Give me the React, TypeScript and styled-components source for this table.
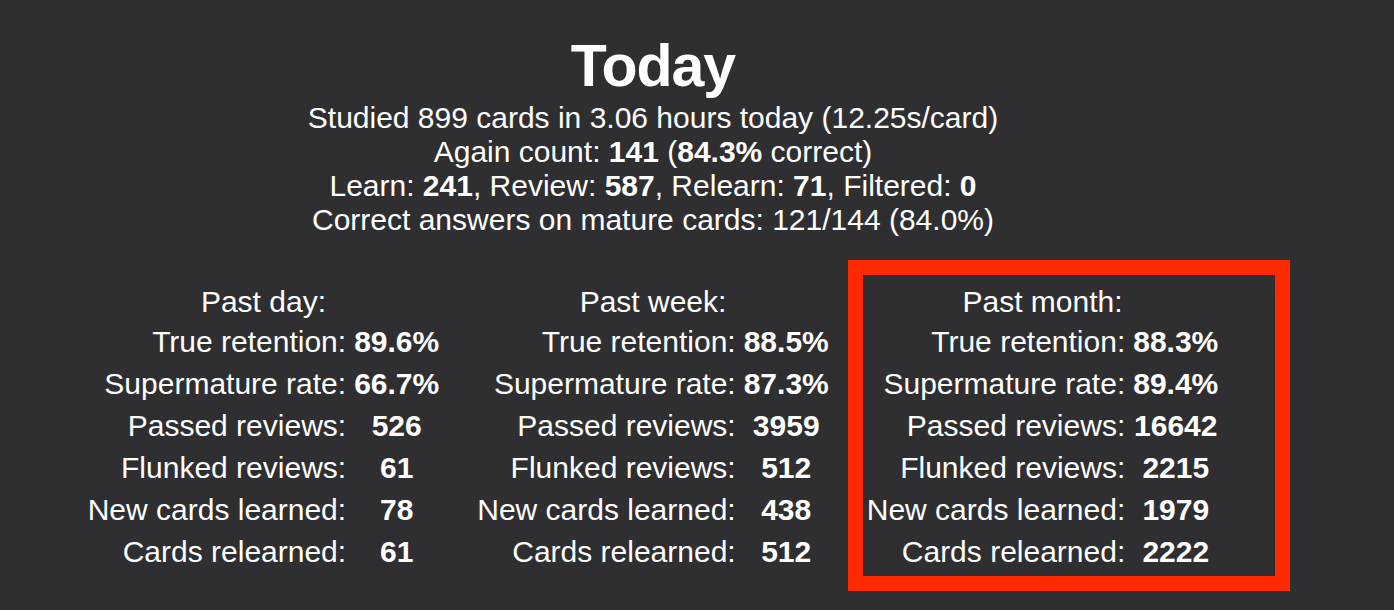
import React from "react";
import styled, { createGlobalStyle } from "styled-components";

const GlobalStyle = createGlobalStyle`
  html, body {
    margin: 0;
    padding: 0;
    background: #2f2f31;
  }
  body {
    font-family: "Liberation Sans", Arial, Helvetica, sans-serif;
    color: #ffffff;
  }
`;

const Page = styled.div`
  box-sizing: border-box;
  width: 1306px;
  min-height: 610px;
  padding-top: 31px;
  text-align: center;
`;

const Title = styled.h1`
  margin: 0;
  font-size: 59px;
  line-height: 70px;
  font-weight: 700;
  letter-spacing: -1px;
`;

const Summary = styled.div`
  font-size: 30px;
  line-height: 34px;
`;

const Line = styled.div``;

const Columns = styled.div`
  margin-top: 48px;
  display: flex;
  justify-content: center;
  gap: 38px;
`;

const Column = styled.div`
  position: relative;
`;

const Highlight = styled.div`
  position: absolute;
  left: -19px;
  top: -25px;
  width: 412px;
  height: 301px;
  border: 15px solid #ff2a00;
  pointer-events: none;
`;

const StatTable = styled.table`
  border-collapse: collapse;
  border-spacing: 0;
  font-size: 30px;
  line-height: 34px;
`;

const HeadCell = styled.th`
  font-weight: 400;
  text-align: center;
  padding: 0 0 2px;
`;

const Label = styled.td`
  text-align: right;
  padding: 4px 4px 4px 0;
  white-space: nowrap;
`;

const Value = styled.td`
  text-align: center;
  font-weight: 700;
  padding: 4px 0 4px 4px;
  white-space: nowrap;
`;

type Period = {
  title: string;
  retention: string;
  supermature: string;
  passed: string;
  flunked: string;
  learned: string;
  relearned: string;
  highlight?: boolean;
};

const periods: Period[] = [
  { title: "Past day:", retention: "89.6%", supermature: "66.7%", passed: "526", flunked: "61", learned: "78", relearned: "61" },
  { title: "Past week:", retention: "88.5%", supermature: "87.3%", passed: "3959", flunked: "512", learned: "438", relearned: "512" },
  { title: "Past month:", retention: "88.3%", supermature: "89.4%", passed: "16642", flunked: "2215", learned: "1979", relearned: "2222", highlight: true },
];

function PeriodTable({ p }: { p: Period }) {
  const rows: [string, string][] = [
    ["True retention:", p.retention],
    ["Supermature rate:", p.supermature],
    ["Passed reviews:", p.passed],
    ["Flunked reviews:", p.flunked],
    ["New cards learned:", p.learned],
    ["Cards relearned:", p.relearned],
  ];
  return (
    <Column>
      <StatTable>
        <thead>
          <tr>
            <HeadCell colSpan={2}>{p.title}</HeadCell>
          </tr>
        </thead>
        <tbody>
          {rows.map(([l, v]) => (
            <tr key={l}>
              <Label>{l}</Label>
              <Value>{v}</Value>
            </tr>
          ))}
        </tbody>
      </StatTable>
      {p.highlight && <Highlight />}
    </Column>
  );
}

export default function App() {
  return (
    <>
      <GlobalStyle />
      <Page>
        <Title>Today</Title>
        <Summary>
          <Line>Studied 899 cards in 3.06 hours today (12.25s/card)</Line>
          <Line>
            Again count: <b>141</b> (<b>84.3%</b> correct)
          </Line>
          <Line>
            Learn: <b>241</b>, Review: <b>587</b>, Relearn: <b>71</b>, Filtered: <b>0</b>
          </Line>
          <Line>Correct answers on mature cards: 121/144 (84.0%)</Line>
        </Summary>
        <Columns>
          {periods.map((p) => (
            <PeriodTable key={p.title} p={p} />
          ))}
        </Columns>
      </Page>
    </>
  );
}
